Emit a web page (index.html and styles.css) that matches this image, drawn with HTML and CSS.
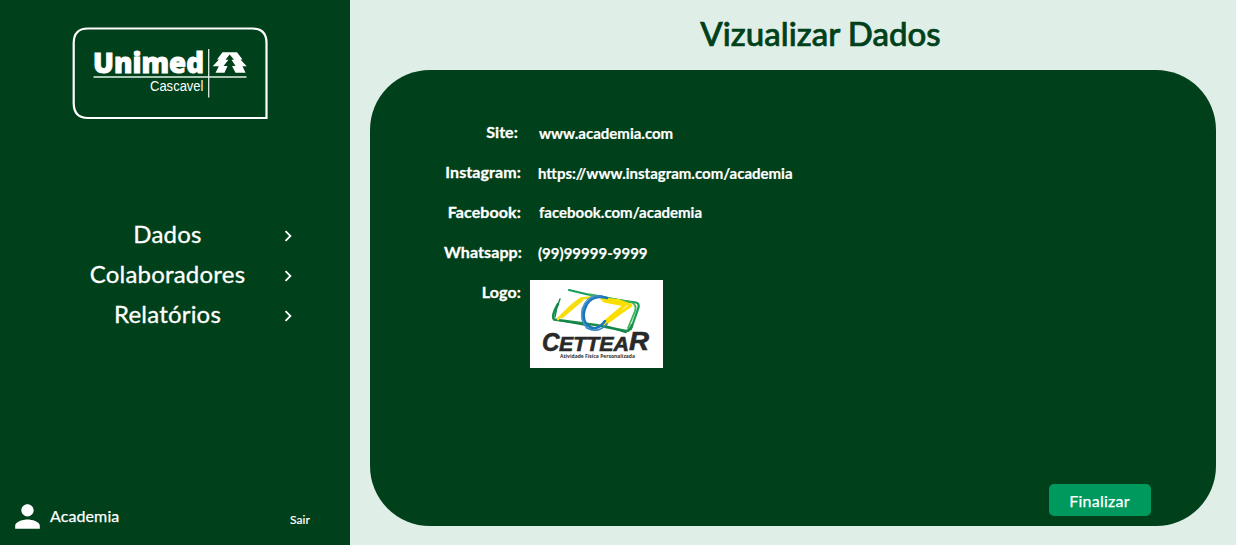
FILE: index.html
```html
<!DOCTYPE html>
<html lang="pt-BR">
<head>
<meta charset="utf-8">
<title>Vizualizar Dados</title>
<link rel="stylesheet" href="styles.css">
</head>
<body>
<aside class="sidebar">
  <svg class="brand" width="196" height="93" viewBox="72 27 196 93" role="img" aria-label="Unimed Cascavel">
    <path d="M88 28.500H252.500Q266.500 28.500 266.500 43V118H88Q73.700 118 73.700 103V43Q73.700 28.500 88 28.500Z" fill="none" stroke="#fff" stroke-width="2.200"/>
    <text class="brand-name" x="93" y="72.600" textLength="111" lengthAdjust="spacingAndGlyphs">Unimed</text>
    <text class="brand-city" x="150" y="90.800" textLength="53.500" lengthAdjust="spacingAndGlyphs">Cascavel</text>
    <path d="M93.500 77H246.500" stroke="#a9c6b3" stroke-width="1.800"/>
    <path d="M208.700 49V97.500" stroke="#e3eee7" stroke-width="1.300"/>
    <path d="M222.500 52.200H237L242.500 59.500H240.500L246.700 66.300H242.500L245.500 72.700H235.500L232 66H235.500L231.500 59.800H234L229.700 54.500L225.500 59.800H228.500L223.500 66H227.500L224.500 72.700H215.500L218.800 66.300H212.700L219 59.500H217Z" fill="#fff"/>
  </svg>
  <nav class="menu">
    <a class="menu-item"><span class="menu-label">Dados</span><svg class="chevron" viewBox="0 0 24 24"><path d="M10 6 8.590 7.410 13.170 12l-4.580 4.590L10 18l6-6z"/></svg></a>
    <a class="menu-item"><span class="menu-label">Colaboradores</span><svg class="chevron" viewBox="0 0 24 24"><path d="M10 6 8.590 7.410 13.170 12l-4.580 4.590L10 18l6-6z"/></svg></a>
    <a class="menu-item"><span class="menu-label">Relatórios</span><svg class="chevron" viewBox="0 0 24 24"><path d="M10 6 8.590 7.410 13.170 12l-4.580 4.590L10 18l6-6z"/></svg></a>
  </nav>
  <footer class="account">
    <svg class="avatar" viewBox="0 0 24 24"><path d="M12 12c2.210 0 4-1.790 4-4s-1.790-4-4-4-4 1.790-4 4 1.790 4 4 4zm0 2c-2.670 0-8 1.340-8 4v2h16v-2c0-2.660-5.330-4-8-4z"/></svg>
    <span class="account-name">Academia</span>
    <a class="logout">Sair</a>
  </footer>
</aside>
<main class="content">
  <h1 class="title">Vizualizar Dados</h1>
  <section class="panel">
    <dl class="fields">
      <dt class="label label-site">Site:</dt><dd class="value value-site">www.academia.com</dd>
      <dt class="label">Instagram:</dt><dd class="value value-instagram">https://www.instagram.com/academia</dd>
      <dt class="label">Facebook:</dt><dd class="value value-facebook">facebook.com/academia</dd>
      <dt class="label label-whatsapp">Whatsapp:</dt><dd class="value value-whatsapp">(99)99999-9999</dd>
      <dt class="label">Logo:</dt>
      <dd class="logo-cell">
        <svg class="logo" width="133" height="88" viewBox="530 280 133 88" role="img" aria-label="Cettear">
          <g fill="none" stroke-linecap="round" stroke-linejoin="round">
            <path d="M569 290 Q600 298 636 302.500Q640 303.500 638 309L631 329" stroke="#15a05a" stroke-width="2.200"/>
            <path d="M590 294.500 632 302.500Q637 305 635 311L628 328" stroke="#45b04f" stroke-width="1.800"/>
            <path d="M558 304Q551 316 554 319.500L596 325 626 331Q630 331 632 325" stroke="#178f4b" stroke-width="2.600"/>
            <path d="M560 299Q556 308 555 317M557 320 590 326M606 326 626 332.500" stroke="#138348" stroke-width="1.400"/>
            <path d="M558 319Q572 304 581 298.500L591 297.500M562 317 582 300" stroke="#f5dd0e" stroke-width="2.600"/>
            <path d="M602 299 618 300.500 631 305.500 620 313 605 324M604 301 625 305 607 320" stroke="#fade00" stroke-width="3"/>
            <path d="M607 298Q593 294 587 304Q580 317 587 325Q596 333 605 321" stroke="#1876b9" stroke-width="2.600"/>
            <path d="M602 296Q591 295 585 305Q578 318 587 328Q598 334 607 324" stroke="#3585c2" stroke-width="1.700"/>
            <path d="M596 295Q586 297 582 309Q580 320 587 328" stroke="#4a94c9" stroke-width="1.200"/>
          </g>
          <g class="logo-name">
            <text x="542" y="351" font-size="25" textLength="17.500" lengthAdjust="spacingAndGlyphs">C</text>
            <text x="559" y="351" font-size="19.500" textLength="70" lengthAdjust="spacingAndGlyphs">ETTEA</text>
            <text x="629" y="350" font-size="25" textLength="20" lengthAdjust="spacingAndGlyphs">R</text>
          </g>
          <text class="logo-tagline" x="560" y="358.300" textLength="75" lengthAdjust="spacingAndGlyphs">Atividade Física Personalizada</text>
        </svg>
      </dd>
    </dl>
    <button class="finish">Finalizar</button>
  </section>
</main>
</body>
</html>
```
FILE: styles.css
```css
* { box-sizing: border-box; }
body { margin: 0; height: 545px; display: flex; overflow: hidden; background: #dfefe7; color: #fff; font-family: Lato, sans-serif; }
.sidebar { width: 350px; height: 545px; background: #00401a; display: flex; flex-direction: column; }
.brand { display: block; margin: 27px 0 0 72px; flex: none; }
.brand-name { font: 800 28px "Open Sans", sans-serif; fill: #fff; stroke: #fff; stroke-width: .9px; }
.brand-city { font: 14px "Liberation Sans", sans-serif; fill: #fff; }
.menu { margin-top: 95px; }
.menu-item { display: flex; align-items: center; height: 40px; }
.menu-label { width: 235px; margin-left: 50px; text-align: center; font-size: 24px; line-height: 38px; height: 40px; letter-spacing: .2px; -webkit-text-stroke: .3px #fff; }
.chevron { width: 22px; height: 22px; margin: 2px 0 0 -8px; fill: #fff; }
.account { margin-top: auto; height: 57px; padding: 0 40px 0 9px; display: flex; align-items: center; }
.avatar { width: 37px; height: 37px; fill: #fff; }
.account-name { margin: -2px 0 0 4px; font-size: 16px; letter-spacing: .1px; -webkit-text-stroke: .25px #fff; }
.logout { margin: 6px 0 0 auto; font-size: 12px; letter-spacing: .1px; -webkit-text-stroke: .2px #fff; }
.content { flex: 1; padding: 0 20px; }
.title { margin: 0; height: 70px; line-height: 66px; padding-left: 55px; text-align: center; font-size: 33px; font-weight: 500; color: #00401a; -webkit-text-stroke: .7px #00401a; }
.panel { height: 456px; border-radius: 60px; background: #00401a; display: flex; flex-direction: column; justify-content: space-between; padding: 42px 65px 10px 60px; }
.fields { margin: 0; display: grid; grid-template-columns: 91px 1fr; column-gap: 9px; grid-auto-rows: 40px; }
.label { text-align: right; font-size: 16px; font-weight: 700; line-height: 40px; white-space: nowrap; letter-spacing: .1px; -webkit-text-stroke: .3px #fff; }
.label-site { padding-right: 3px; }
.label-whatsapp { margin-right: -1px; }
.value { margin: 0; padding: 1px 0 0 8px; font-size: 15px; font-weight: 700; line-height: 40px; -webkit-text-stroke: .2px #fff; }
.value-site, .value-facebook { padding-left: 9px; }
.value-facebook { padding-top: 0; }
.logo-cell { margin: 0; padding-top: 8px; }
.logo { display: block; background: #fff; }
.logo-name { font-family: "Liberation Sans", sans-serif; font-weight: 700; font-style: italic; fill: #292929; stroke: #292929; stroke-width: .6px; }
.logo-tagline { font: 700 5.500px "Open Sans", sans-serif; fill: #333; }
.finish { align-self: flex-end; width: 102px; height: 32px; padding: 1px 1px 0 0; border: 0; border-radius: 5px; background: #00995d; color: #fff; font: 16px Lato, sans-serif; letter-spacing: .25px; -webkit-text-stroke: .25px #fff; }
```
